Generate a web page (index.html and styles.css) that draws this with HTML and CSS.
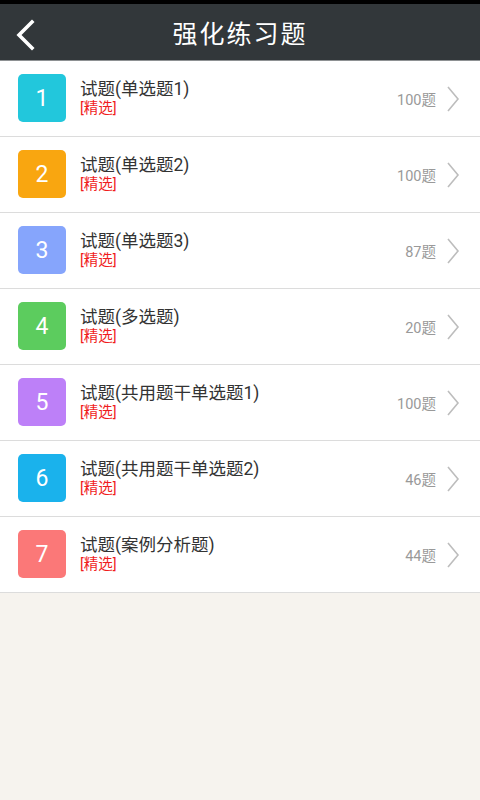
FILE: index.html
```html
<!DOCTYPE html>
<html lang="zh-CN">
<head>
    <meta charset="UTF-8">
    <meta name="viewport" content="width=device-width, initial-scale=1.0">
    <title>强化练习题</title>
    <link rel="stylesheet" href="styles.css">
</head>
<body>
    <div class="status-bar"></div>
    <div class="header">
        <svg class="back" width="24" height="32" viewBox="0 0 24 32">
            <polyline points="19,3 6,16 19,29" fill="none" stroke="#fff" stroke-width="3.6" stroke-linecap="square"/>
        </svg>
        <h1>强化练习题</h1>
    </div>

    <ul class="list">
        <li class="item">
            <div class="num c1">1</div>
            <div class="info">
                <div class="title">试题(单选题1)</div>
                <div class="tag">[精选]</div>
            </div>
            <div class="count">100题</div>
            <svg class="arrow" width="14" height="26" viewBox="0 0 14 26"><polyline points="2,1 12,13 2,25" fill="none" stroke="#bdbdbd" stroke-width="1.6"/></svg>
        </li>
        <li class="item">
            <div class="num c2">2</div>
            <div class="info">
                <div class="title">试题(单选题2)</div>
                <div class="tag">[精选]</div>
            </div>
            <div class="count">100题</div>
            <svg class="arrow" width="14" height="26" viewBox="0 0 14 26"><polyline points="2,1 12,13 2,25" fill="none" stroke="#bdbdbd" stroke-width="1.6"/></svg>
        </li>
        <li class="item">
            <div class="num c3">3</div>
            <div class="info">
                <div class="title">试题(单选题3)</div>
                <div class="tag">[精选]</div>
            </div>
            <div class="count">87题</div>
            <svg class="arrow" width="14" height="26" viewBox="0 0 14 26"><polyline points="2,1 12,13 2,25" fill="none" stroke="#bdbdbd" stroke-width="1.6"/></svg>
        </li>
        <li class="item">
            <div class="num c4">4</div>
            <div class="info">
                <div class="title">试题(多选题)</div>
                <div class="tag">[精选]</div>
            </div>
            <div class="count">20题</div>
            <svg class="arrow" width="14" height="26" viewBox="0 0 14 26"><polyline points="2,1 12,13 2,25" fill="none" stroke="#bdbdbd" stroke-width="1.6"/></svg>
        </li>
        <li class="item">
            <div class="num c5">5</div>
            <div class="info">
                <div class="title">试题(共用题干单选题1)</div>
                <div class="tag">[精选]</div>
            </div>
            <div class="count">100题</div>
            <svg class="arrow" width="14" height="26" viewBox="0 0 14 26"><polyline points="2,1 12,13 2,25" fill="none" stroke="#bdbdbd" stroke-width="1.6"/></svg>
        </li>
        <li class="item">
            <div class="num c6">6</div>
            <div class="info">
                <div class="title">试题(共用题干单选题2)</div>
                <div class="tag">[精选]</div>
            </div>
            <div class="count">46题</div>
            <svg class="arrow" width="14" height="26" viewBox="0 0 14 26"><polyline points="2,1 12,13 2,25" fill="none" stroke="#bdbdbd" stroke-width="1.6"/></svg>
        </li>
        <li class="item">
            <div class="num c7">7</div>
            <div class="info">
                <div class="title">试题(案例分析题)</div>
                <div class="tag">[精选]</div>
            </div>
            <div class="count">44题</div>
            <svg class="arrow" width="14" height="26" viewBox="0 0 14 26"><polyline points="2,1 12,13 2,25" fill="none" stroke="#bdbdbd" stroke-width="1.6"/></svg>
        </li>
    </ul>
</body>
</html>
```

FILE: styles.css
```css
html, body {
    margin: 0;
    padding: 0;
    height: 100%;
}
body {
    background: #f6f3ee;
    font-family: Roboto, "Noto Sans CJK SC", sans-serif;
}
.status-bar {
    height: 4px;
    background: #000;
}
.header {
    position: relative;
    height: 56px;
    background: #32373a;
    border-bottom: 1px solid #8e9193;
    display: flex;
    align-items: center;
    justify-content: center;
}
.header h1 {
    margin: 0;
    color: #fff;
    font-size: 25px;
    font-weight: normal;
    letter-spacing: 2px;
}
.back {
    position: absolute;
    left: 13px;
    top: 15px;
}
.list {
    list-style: none;
    margin: 0;
    padding: 0;
    background: #fff;
}
.item {
    height: 75px;
    border-bottom: 1px solid #dcdcdc;
    display: flex;
    align-items: center;
    padding: 0 20px 0 18px;
}
.num {
    width: 48px;
    height: 48px;
    border-radius: 5px;
    color: #fff;
    font-size: 23px;
    display: flex;
    align-items: center;
    justify-content: center;
    margin-top: -1px;
}
.c1 { background: #22c7dc; }
.c2 { background: #f9a610; }
.c3 { background: #86a5fc; }
.c4 { background: #5ccc5e; }
.c5 { background: #bd80f8; }
.c6 { background: #1ab2ec; }
.c7 { background: #fb7878; }
.info {
    flex: 1;
    margin-left: 14px;
    margin-top: -1px;
}
.title {
    color: #333;
    font-size: 17.5px;
    line-height: 22px;
}
.tag {
    color: #f01d1d;
    font-size: 14.5px;
    line-height: 18px;
}
.count {
    color: #999;
    font-size: 14.5px;
}
.arrow {
    margin-left: 10px;
}
```
